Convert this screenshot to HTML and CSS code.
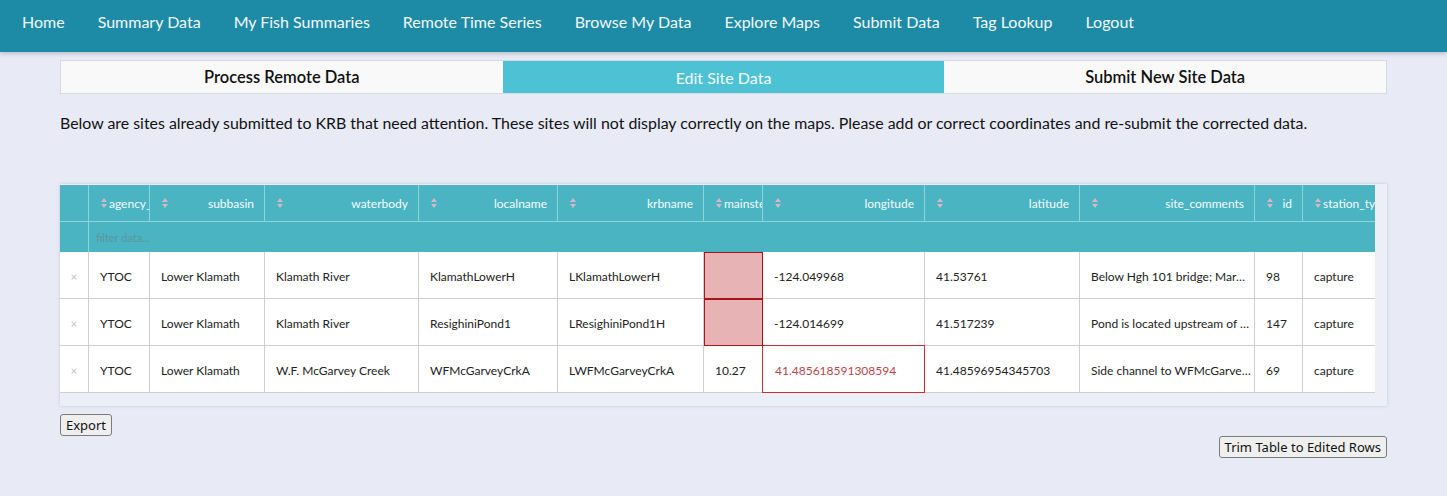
FILE: index.html
```html
<!DOCTYPE html>
<html>
<head>
<meta charset="utf-8">
<link rel="stylesheet" href="styles.css">
</head>
<body>
<nav class="navbar">
  <a>Home</a>
  <a>Summary Data</a>
  <a>My Fish Summaries</a>
  <a>Remote Time Series</a>
  <a>Browse My Data</a>
  <a>Explore Maps</a>
  <a>Submit Data</a>
  <a>Tag Lookup</a>
  <a>Logout</a>
</nav>
<main class="main">
  <div class="tabs">
    <div class="tab">Process Remote Data</div>
    <div class="tab active">Edit Site Data</div>
    <div class="tab">Submit New Site Data</div>
  </div>
  <p class="intro">Below are sites already submitted to KRB that need attention. These sites will not display correctly on the maps. Please add or correct coordinates and re-submit the corrected data.</p>

  <div class="table-wrap">
    <div class="table-clip">
      <div class="grid">
        <div class="row head">
          <div class="c c0"></div>
          <div class="c c1"><i class="sort"></i><span>agency_</span></div>
          <div class="c c2"><i class="sort"></i><span>subbasin</span></div>
          <div class="c c3"><i class="sort"></i><span>waterbody</span></div>
          <div class="c c4"><i class="sort"></i><span>localname</span></div>
          <div class="c c5"><i class="sort"></i><span>krbname</span></div>
          <div class="c c6"><i class="sort"></i><span>mainstem</span></div>
          <div class="c c7"><i class="sort"></i><span>longitude</span></div>
          <div class="c c8"><i class="sort"></i><span>latitude</span></div>
          <div class="c c9"><i class="sort"></i><span>site_comments</span></div>
          <div class="c c10"><i class="sort"></i><span>id</span></div>
          <div class="c c11"><i class="sort"></i><span>station_type</span></div>
        </div>
        <div class="row filter">
          <div class="c c0"></div>
          <div class="filter-input">filter data...</div>
        </div>
        <div class="row data">
          <div class="c c0 x">×</div>
          <div class="c c1">YTOC</div>
          <div class="c c2">Lower Klamath</div>
          <div class="c c3">Klamath River</div>
          <div class="c c4">KlamathLowerH</div>
          <div class="c c5">LKlamathLowerH</div>
          <div class="c c6 bad"></div>
          <div class="c c7">-124.049968</div>
          <div class="c c8">41.53761</div>
          <div class="c c9">Below Hgh 101 bridge; Mar…</div>
          <div class="c c10">98</div>
          <div class="c c11">capture</div>
        </div>
        <div class="row data">
          <div class="c c0 x">×</div>
          <div class="c c1">YTOC</div>
          <div class="c c2">Lower Klamath</div>
          <div class="c c3">Klamath River</div>
          <div class="c c4">ResighiniPond1</div>
          <div class="c c5">LResighiniPond1H</div>
          <div class="c c6 bad bad-cont"></div>
          <div class="c c7">-124.014699</div>
          <div class="c c8">41.517239</div>
          <div class="c c9">Pond is located upstream of …</div>
          <div class="c c10">147</div>
          <div class="c c11">capture</div>
        </div>
        <div class="row data">
          <div class="c c0 x">×</div>
          <div class="c c1">YTOC</div>
          <div class="c c2">Lower Klamath</div>
          <div class="c c3">W.F. McGarvey Creek</div>
          <div class="c c4">WFMcGarveyCrkA</div>
          <div class="c c5">LWFMcGarveyCrkA</div>
          <div class="c c6">10.27</div>
          <div class="c c7 warn">41.485618591308594</div>
          <div class="c c8">41.48596954345703</div>
          <div class="c c9">Side channel to WFMcGarve…</div>
          <div class="c c10">69</div>
          <div class="c c11">capture</div>
        </div>
      </div>
    </div>
  </div>

  <div class="actions">
    <button class="btn">Export</button>
  </div>
  <div class="actions right">
    <button class="btn">Trim Table to Edited Rows</button>
  </div>
</main>
</body>
</html>
```

FILE: styles.css
```css
* { box-sizing: border-box; }
html, body { margin: 0; padding: 0; }
body {
  background: #e8ebf6;
  font-family: Lato, "Open Sans", sans-serif;
  color: #222;
  width: 1447px;
  height: 496px;
  overflow: hidden;
}
.navbar {
  height: 52px;
  background: #1e8ba6;
  display: flex;
  align-items: flex-start;
  padding: 12px 0 0 22px;
  gap: 33px;
  box-shadow: 0 2px 4px rgba(0,0,0,0.18);
  position: relative;
}
.navbar a {
  color: #f2f7f9;
  font-size: 16px;
  line-height: 20px;
}
.main {
  padding: 8px 60px 0 60px;
}
.tabs {
  display: flex;
  height: 34px;
  border: 1px solid #d8d8e0;
}
.tab {
  flex: 1;
  display: flex;
  align-items: center;
  justify-content: center;
  background: #f9f9fa;
  font-size: 16.5px;
  font-weight: 600;
  color: #111;
}
.tab + .tab { border-left: 1px solid #d8d8e0; }
.tab.active {
  background: #4dc2d4;
  color: #f4fbfd;
  font-weight: 400;
  font-size: 16px;
  border-left: none;
}
.tab.active + .tab { border-left: none; }
.intro {
  margin: 19px 0 0 0;
  font-size: 15.9px;
  line-height: 20px;
  color: #111;
}
.table-wrap {
  margin-top: 51px;
  width: 1327px;
  background: #eceff8;
  box-shadow: 0 0 3px rgba(120,130,170,0.35);
  padding: 1px 12px 13px 0;
}
.table-clip {
  width: 1315px;
  overflow: hidden;
}
.grid {
  width: 1340px;
}
.row {
  display: flex;
}
.c {
  flex: none;
  display: flex;
  align-items: center;
  overflow: hidden;
  white-space: nowrap;
  font-size: 12px;
  padding: 0 10px;
}
.c0 { width: 29px; }
.c1 { width: 61px; }
.c2 { width: 115px; }
.c3 { width: 154px; }
.c4 { width: 139px; }
.c5 { width: 146px; }
.c6 { width: 59px; }
.c7 { width: 162px; }
.c8 { width: 155px; }
.c9 { width: 175px; }
.c10 { width: 48px; }
.c11 { width: 90px; }

.head {
  height: 37px;
  background: #4bb4c2;
  border-bottom: 1px solid #8fd3dc;
}
.head .c {
  color: #f4fbfc;
  border-right: 1px solid #8fd3dc;
  padding: 0 10px 0 12px;
}
.head .c span {
  flex: 1;
  text-align: right;
  overflow: hidden;
  white-space: nowrap;
}
.head .c1 span, .head .c6 span, .head .c11 span {
  flex: none;
  text-align: left;
}
.head .c1, .head .c6, .head .c11 { padding-right: 0; }
.sort {
  flex: none;
  width: 7px;
  height: 10px;
  margin-right: 1px;
  position: relative;
}
.sort::before, .sort::after {
  content: "";
  position: absolute;
  left: 0;
  width: 0;
  height: 0;
  border-left: 3.5px solid transparent;
  border-right: 3.5px solid transparent;
}
.sort::before {
  top: 0;
  border-bottom: 4px solid #d4b8c8;
}
.sort::after {
  bottom: 0;
  border-top: 4px solid #d4b8c8;
}

.filter {
  height: 30px;
  background: #4bb4c2;
}
.filter .c0 { border-right: 1px solid #8fd3dc; }
.filter-input {
  flex: 1;
  display: flex;
  align-items: center;
  padding-left: 7px;
  font-size: 11px;
  color: #5e939e;
}

.data {
  height: 47px;
  background: #fff;
  border-bottom: 1px solid #cfcfcf;
}
.data .c {
  color: #222;
  border-right: 1px solid #cfcfcf;
  padding-left: 11px;
  padding-top: 2px;
}
.data .c0 {
  justify-content: center;
  color: #c2c2c2;
  font-size: 11px;
  padding: 2px 0 0 0;
}
.data .c11 { border-right: none; }
.data .bad {
  background: #e8b3b4;
  border: 1px solid #a8141c;
  margin-bottom: -1px;
  position: relative;
}
.data .warn {
  color: #b8454b;
  border: 1px solid #c3303a;
  margin-left: -1px;
  width: 163px;
  margin-top: -1px;
  margin-bottom: -1px;
  padding-left: 12px;
}

.actions {
  display: flex;
  margin-top: 8px;
}
.actions.right {
  justify-content: flex-end;
  margin-top: 0;
}
.btn {
  font-family: "Noto Sans", "Open Sans", sans-serif;
  font-size: 13px;
  color: #111;
  background: #efefef;
  border: 1px solid #7b7b7b;
  border-radius: 3px;
  height: 22px;
  padding: 0 5px;
  line-height: 20px;
}
```
